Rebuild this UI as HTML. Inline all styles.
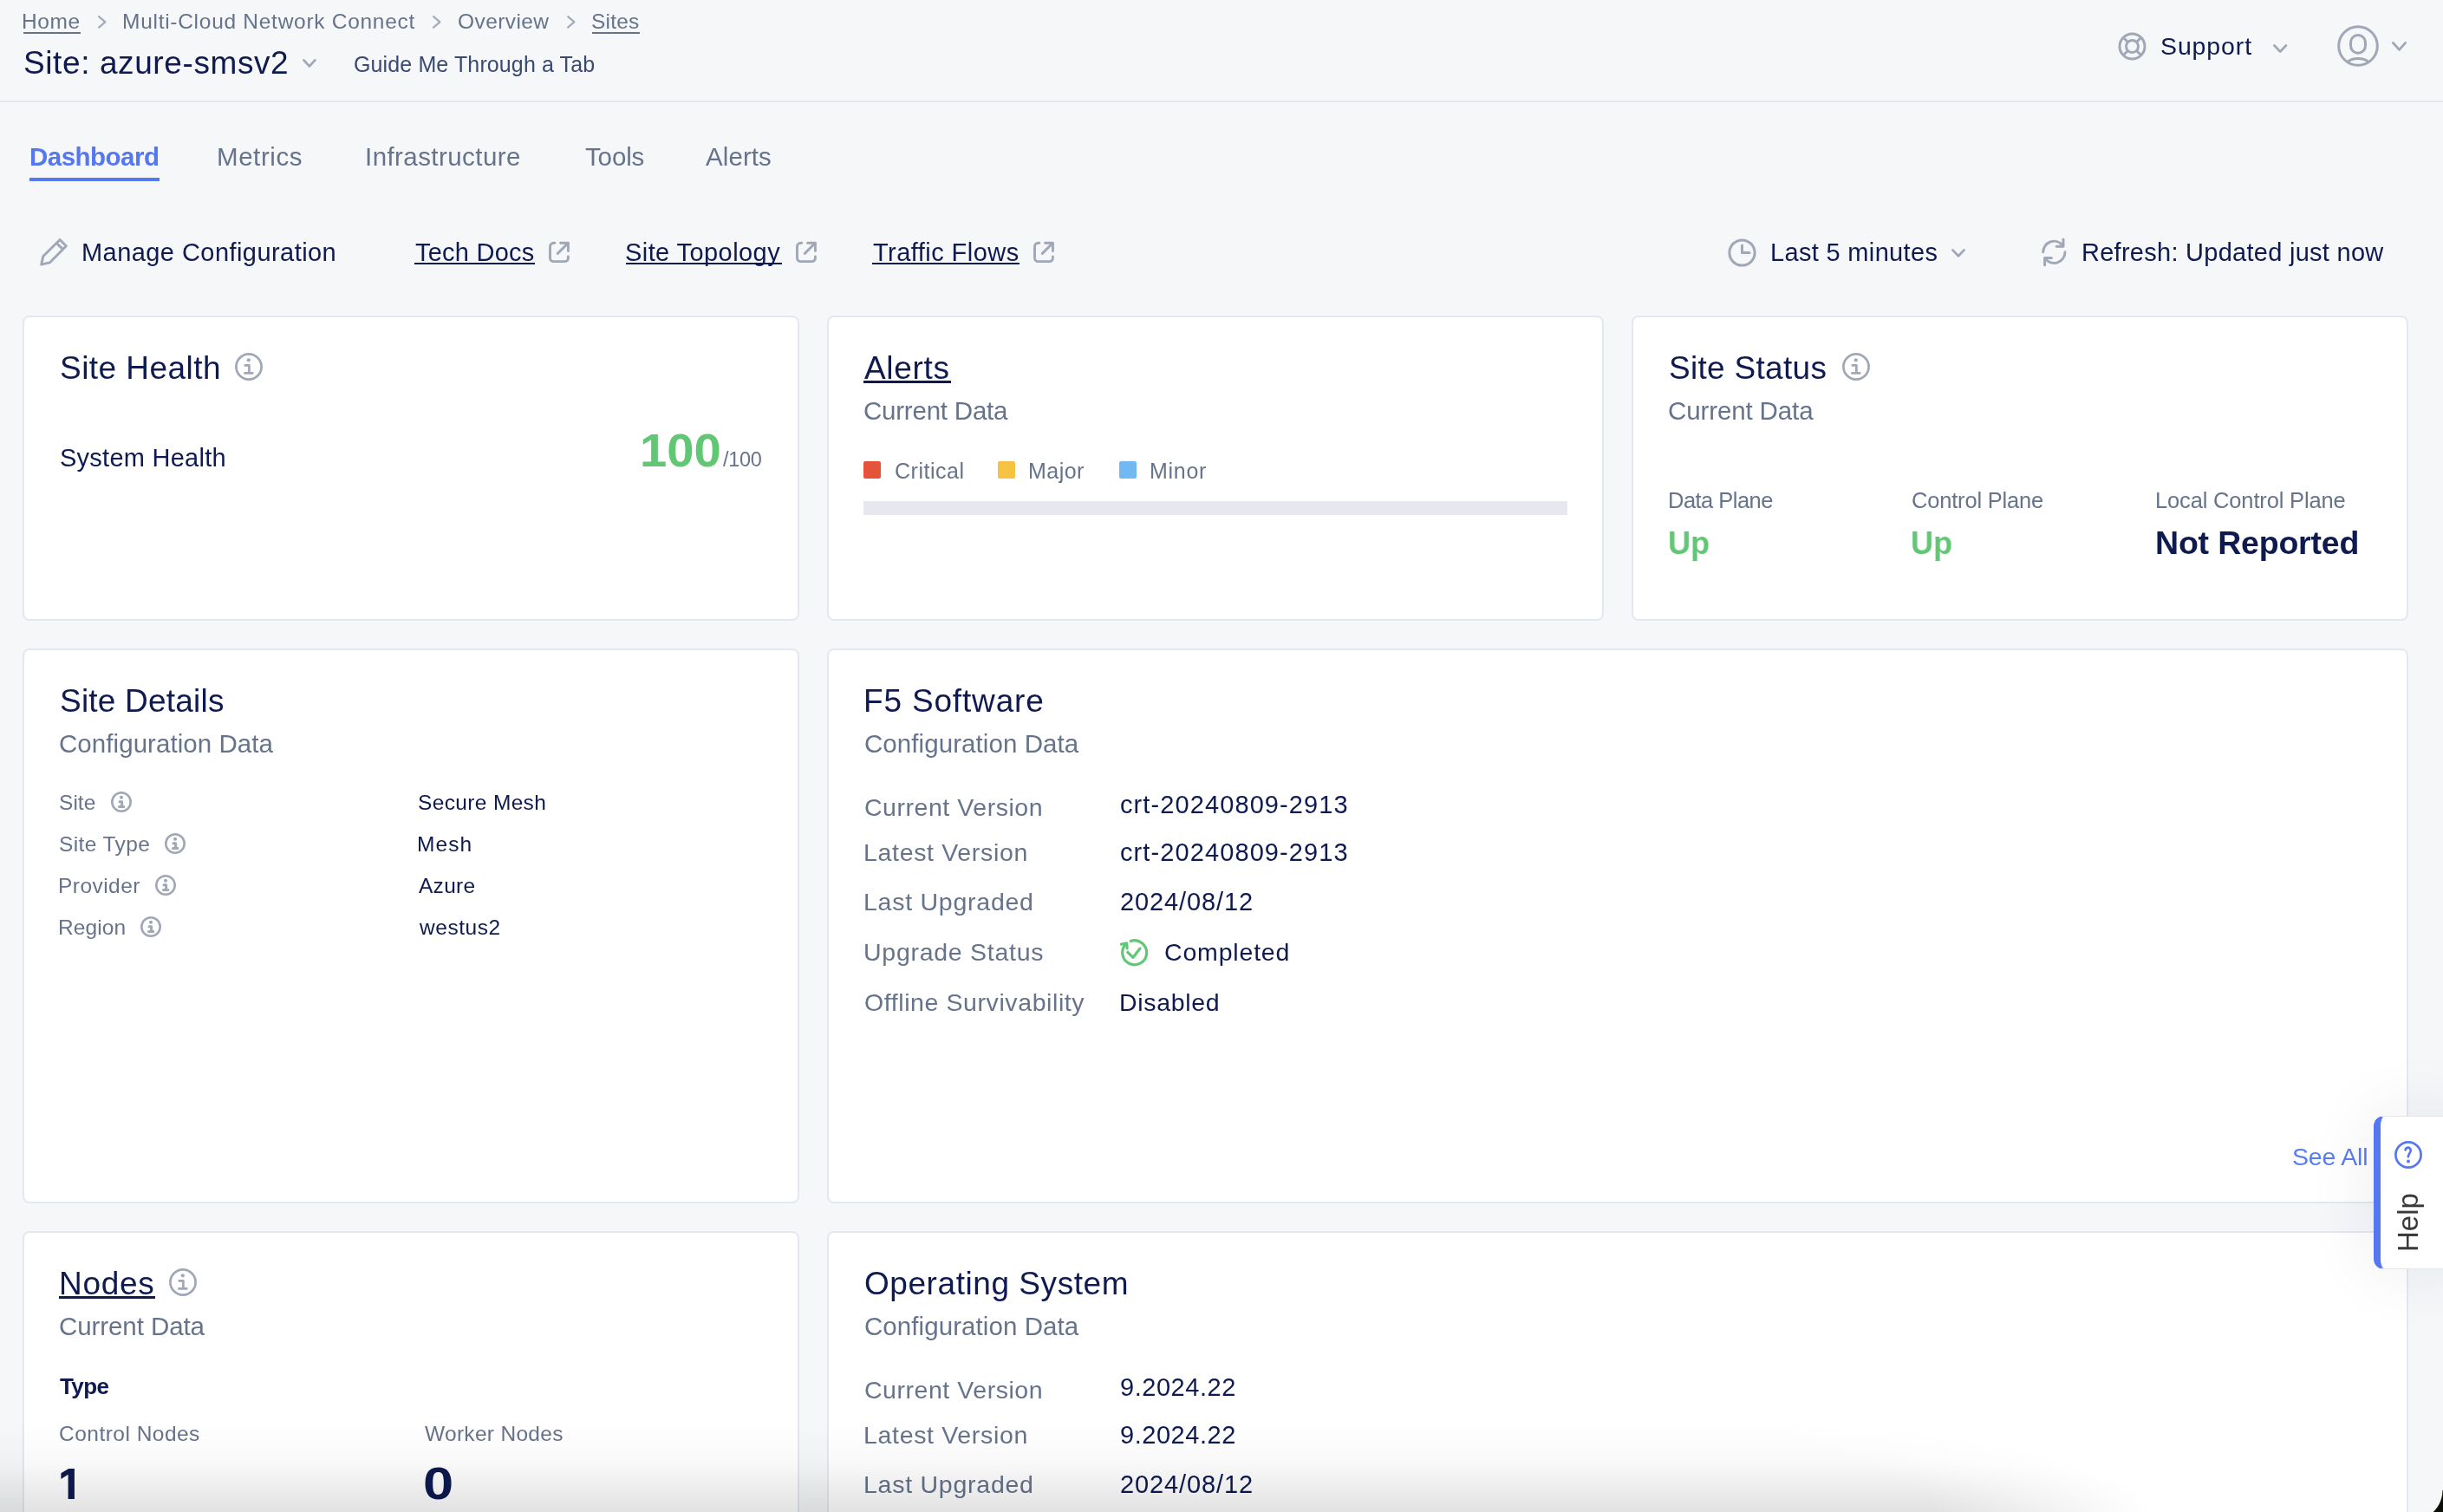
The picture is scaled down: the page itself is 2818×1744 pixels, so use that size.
<!DOCTYPE html>
<html><head><meta charset="utf-8">
<style>
html,body{margin:0;padding:0;}
body{width:2818px;height:1744px;position:relative;overflow:hidden;background:#f6f7f9;font-family:"Liberation Sans",sans-serif;}
.t{position:absolute;white-space:nowrap;will-change:transform;}
.r{position:absolute;}
.i{position:absolute;overflow:visible;}
.card{position:absolute;box-sizing:border-box;background:#fff;border:2px solid #e4e7f1;border-radius:8px;}
#help{position:absolute;left:2738px;top:1287px;width:120px;height:177px;box-sizing:border-box;background:#fff;border:1px solid #e3e6f0;border-left:8px solid #5578f1;border-radius:12px 0 0 12px;box-shadow:0 0 80px rgba(30,40,70,0.085);}
#shade{position:absolute;left:0;top:1640px;width:2818px;height:104px;background:linear-gradient(to bottom,rgba(0,0,0,0) 0%,rgba(0,0,0,0.025) 45%,rgba(0,0,0,0.115) 100%);-webkit-mask-image:radial-gradient(ellipse 2480px 230px at 0 100%,#000 90%,transparent 100%);mask-image:radial-gradient(ellipse 2480px 230px at 0 100%,#000 90%,transparent 100%);}
#corner{position:absolute;left:2783px;top:1719px;width:35px;height:25px;background:radial-gradient(circle 34.4px at 0 0,transparent 33.9px,#0e0e08 34.9px);}
</style></head><body>
<div class="r" style="left:0px;top:116px;width:2818px;height:2px;background:#e4e7ef;"></div>
<div class="r" style="left:26.5px;top:37px;width:66px;height:2px;background:#66738a;"></div>
<div class="r" style="left:682.5px;top:37px;width:55px;height:2px;background:#66738a;"></div>
<svg class="i" style="left:112.5px;top:17.8px" width="9.5" height="14.8" viewBox="0 0 9.5 14.8"><path d="M1.1 1.1L8.4 7.4L1.1 13.700000000000001" fill="none" stroke="#a3abbb" stroke-width="2.2" stroke-linecap="round" stroke-linejoin="round"/></svg>
<svg class="i" style="left:498.7px;top:17.8px" width="9.5" height="14.8" viewBox="0 0 9.5 14.8"><path d="M1.1 1.1L8.4 7.4L1.1 13.700000000000001" fill="none" stroke="#a3abbb" stroke-width="2.2" stroke-linecap="round" stroke-linejoin="round"/></svg>
<svg class="i" style="left:653.5px;top:17.8px" width="9.5" height="14.8" viewBox="0 0 9.5 14.8"><path d="M1.1 1.1L8.4 7.4L1.1 13.700000000000001" fill="none" stroke="#a3abbb" stroke-width="2.2" stroke-linecap="round" stroke-linejoin="round"/></svg>
<svg class="i" style="left:349.2px;top:67.6px" width="15.8" height="9.8" viewBox="0 0 15.8 9.8"><path d="M1.4 1.4L7.9 8.4L14.4 1.4" fill="none" stroke="#a0a7b7" stroke-width="2.8" stroke-linecap="round" stroke-linejoin="round"/></svg>
<div class="r" style="left:34px;top:205px;width:150px;height:4px;background:#5578f1;"></div>
<svg class="i" style="left:40px;top:268px" width="45" height="45" viewBox="0 0 45 45"><g transform="translate(22 22.8) scale(1.055) translate(-22 -22.8)"><path d="M28.7 9.3L35.6 16.2L17.6 34.3L8.4 36.4L10.5 27.2Z M25.1 12.9L32 19.8" fill="none" stroke="#a0a7b7" stroke-width="2.75" stroke-linejoin="round" stroke-linecap="round"/></g></svg>
<div class="r" style="left:478px;top:303px;width:139px;height:2px;background:#0e1a50;"></div>
<div class="r" style="left:721.5px;top:303px;width:180px;height:2px;background:#0e1a50;"></div>
<div class="r" style="left:1006px;top:303px;width:170px;height:2px;background:#0e1a50;"></div>
<svg class="i" style="left:633px;top:278.5px" width="24" height="24" viewBox="0 0 24 24"><path d="M6.85 1.25H5.5A4 4 0 0 0 1.5 5.25V18.6A4 4 0 0 0 5.5 22.6H18.45A4 4 0 0 0 22.45 18.6V16.95" fill="none" stroke="#a0a7b7" stroke-width="2.9" stroke-linecap="round"/><path d="M13.55 1.25H22.45V10.55M22.45 1.25L10.3 13.4" fill="none" stroke="#a0a7b7" stroke-width="2.9" stroke-linecap="round" stroke-linejoin="round"/></svg>
<svg class="i" style="left:918px;top:278.5px" width="24" height="24" viewBox="0 0 24 24"><path d="M6.85 1.25H5.5A4 4 0 0 0 1.5 5.25V18.6A4 4 0 0 0 5.5 22.6H18.45A4 4 0 0 0 22.45 18.6V16.95" fill="none" stroke="#a0a7b7" stroke-width="2.9" stroke-linecap="round"/><path d="M13.55 1.25H22.45V10.55M22.45 1.25L10.3 13.4" fill="none" stroke="#a0a7b7" stroke-width="2.9" stroke-linecap="round" stroke-linejoin="round"/></svg>
<svg class="i" style="left:1191.5px;top:278.5px" width="24" height="24" viewBox="0 0 24 24"><path d="M6.85 1.25H5.5A4 4 0 0 0 1.5 5.25V18.6A4 4 0 0 0 5.5 22.6H18.45A4 4 0 0 0 22.45 18.6V16.95" fill="none" stroke="#a0a7b7" stroke-width="2.9" stroke-linecap="round"/><path d="M13.55 1.25H22.45V10.55M22.45 1.25L10.3 13.4" fill="none" stroke="#a0a7b7" stroke-width="2.9" stroke-linecap="round" stroke-linejoin="round"/></svg>
<svg class="i" style="left:1993px;top:274.5px" width="33" height="33" viewBox="0 0 33 33"><circle cx="16.5" cy="16.5" r="14.6" fill="none" stroke="#a0a7b7" stroke-width="3"/><path d="M16.5 8V16.5H25" fill="none" stroke="#a0a7b7" stroke-width="3" stroke-linecap="round" stroke-linejoin="round"/></svg>
<svg class="i" style="left:2251px;top:287.2px" width="16" height="9.6" viewBox="0 0 16 9.6"><path d="M1.4 1.4L8.0 8.2L14.6 1.4" fill="none" stroke="#a0a7b7" stroke-width="2.8" stroke-linecap="round" stroke-linejoin="round"/></svg>
<svg class="i" style="left:2350px;top:270px" width="40" height="42" viewBox="0 0 40 42"><path d="M6.8 20.8A12.6 12.6 0 0 1 28.95 12.6M32 20.8A12.6 12.6 0 0 1 9.85 29" fill="none" stroke="#a0a7b7" stroke-width="3" stroke-linecap="round"/><path d="M30 6V14.2H22.2M8.6 35.8V27.5H16.4" fill="none" stroke="#a0a7b7" stroke-width="3" stroke-linecap="round" stroke-linejoin="round"/></svg>
<svg class="i" style="left:2443px;top:36.6px" width="33" height="33" viewBox="0 0 33 33"><circle cx="16.5" cy="16.5" r="14.5" fill="none" stroke="#a0a7b7" stroke-width="3"/><circle cx="16.5" cy="16.5" r="7" fill="none" stroke="#a0a7b7" stroke-width="3"/><path d="M6.2 6.2L11.5 11.5M26.8 6.2L21.5 11.5M6.2 26.8L11.5 21.5M26.8 26.8L21.5 21.5" stroke="#a0a7b7" stroke-width="3"/></svg>
<svg class="i" style="left:2621.9px;top:51.1px" width="16.4" height="9.9" viewBox="0 0 16.4 9.9"><path d="M1.4 1.4L8.2 8.5L14.999999999999998 1.4" fill="none" stroke="#a0a7b7" stroke-width="2.8" stroke-linecap="round" stroke-linejoin="round"/></svg>
<svg class="i" style="left:2696px;top:29px" width="48" height="48" viewBox="0 0 48 48"><circle cx="24" cy="24" r="22.3" fill="none" stroke="#a0a7b7" stroke-width="3"/><rect x="15.5" y="11.5" width="17" height="20.7" rx="8.5" ry="8.5" fill="none" stroke="#a0a7b7" stroke-width="3"/><path d="M12.5 42A14 8 0 0 1 35.5 42" fill="none" stroke="#a0a7b7" stroke-width="3"/></svg>
<svg class="i" style="left:2759.2px;top:47.5px" width="17.1" height="10.8" viewBox="0 0 17.1 10.8"><path d="M1.4 1.4L8.55 9.4L15.700000000000001 1.4" fill="none" stroke="#a0a7b7" stroke-width="2.8" stroke-linecap="round" stroke-linejoin="round"/></svg>
<div class="card" style="left:26px;top:364px;width:896px;height:352px"></div>
<div class="card" style="left:954px;top:364px;width:896px;height:352px"></div>
<div class="card" style="left:1882px;top:364px;width:896px;height:352px"></div>
<div class="card" style="left:26px;top:748px;width:896px;height:640px"></div>
<div class="card" style="left:954px;top:748px;width:1824px;height:640px"></div>
<div class="card" style="left:26px;top:1420px;width:896px;height:380px"></div>
<div class="card" style="left:954px;top:1420px;width:1824px;height:380px"></div>
<svg class="i" style="left:271px;top:407px" width="32" height="32" viewBox="0 0 32 32"><circle cx="16" cy="16" r="14.6" fill="none" stroke="#a0a7b7" stroke-width="2.7"/><circle cx="15.8" cy="8.3" r="2.1" fill="#a0a7b7"/><path d="M11.8 14.4H16.4V23.4M11.4 23.4H20.3" fill="none" stroke="#a0a7b7" stroke-width="2.7" stroke-linecap="round" stroke-linejoin="round"/></svg>
<svg class="i" style="left:2125px;top:407px" width="32" height="32" viewBox="0 0 32 32"><circle cx="16" cy="16" r="14.6" fill="none" stroke="#a0a7b7" stroke-width="2.7"/><circle cx="15.8" cy="8.3" r="2.1" fill="#a0a7b7"/><path d="M11.8 14.4H16.4V23.4M11.4 23.4H20.3" fill="none" stroke="#a0a7b7" stroke-width="2.7" stroke-linecap="round" stroke-linejoin="round"/></svg>
<svg class="i" style="left:195px;top:1463px" width="32" height="32" viewBox="0 0 32 32"><circle cx="16" cy="16" r="14.6" fill="none" stroke="#a0a7b7" stroke-width="2.7"/><circle cx="15.8" cy="8.3" r="2.1" fill="#a0a7b7"/><path d="M11.8 14.4H16.4V23.4M11.4 23.4H20.3" fill="none" stroke="#a0a7b7" stroke-width="2.7" stroke-linecap="round" stroke-linejoin="round"/></svg>
<svg class="i" style="left:127.5px;top:913.3px" width="24" height="24" viewBox="0 0 24 24"><circle cx="12" cy="12" r="10.7" fill="none" stroke="#a0a7b7" stroke-width="2.6"/><circle cx="12" cy="6.7" r="2.05" fill="#a0a7b7"/><path d="M10 11.7H12.6V17.6M9.5 17.6H14.8" fill="none" stroke="#a0a7b7" stroke-width="3" stroke-linecap="round" stroke-linejoin="round"/></svg>
<svg class="i" style="left:190.3px;top:961.3px" width="24" height="24" viewBox="0 0 24 24"><circle cx="12" cy="12" r="10.7" fill="none" stroke="#a0a7b7" stroke-width="2.6"/><circle cx="12" cy="6.7" r="2.05" fill="#a0a7b7"/><path d="M10 11.7H12.6V17.6M9.5 17.6H14.8" fill="none" stroke="#a0a7b7" stroke-width="3" stroke-linecap="round" stroke-linejoin="round"/></svg>
<svg class="i" style="left:178.5px;top:1009.3px" width="24" height="24" viewBox="0 0 24 24"><circle cx="12" cy="12" r="10.7" fill="none" stroke="#a0a7b7" stroke-width="2.6"/><circle cx="12" cy="6.7" r="2.05" fill="#a0a7b7"/><path d="M10 11.7H12.6V17.6M9.5 17.6H14.8" fill="none" stroke="#a0a7b7" stroke-width="3" stroke-linecap="round" stroke-linejoin="round"/></svg>
<svg class="i" style="left:161.7px;top:1057.3px" width="24" height="24" viewBox="0 0 24 24"><circle cx="12" cy="12" r="10.7" fill="none" stroke="#a0a7b7" stroke-width="2.6"/><circle cx="12" cy="6.7" r="2.05" fill="#a0a7b7"/><path d="M10 11.7H12.6V17.6M9.5 17.6H14.8" fill="none" stroke="#a0a7b7" stroke-width="3" stroke-linecap="round" stroke-linejoin="round"/></svg>
<div class="r" style="left:996px;top:439px;width:100.5px;height:3px;background:#0e1a50;"></div>
<div class="r" style="left:68px;top:1495px;width:111px;height:3px;background:#0e1a50;"></div>
<div class="r" style="left:996px;top:532px;width:20px;height:20px;background:#e5543a;border-radius:2px"></div>
<div class="r" style="left:1151px;top:532px;width:20px;height:20px;background:#f5c242;border-radius:2px"></div>
<div class="r" style="left:1291px;top:532px;width:20px;height:20px;background:#72b9f3;border-radius:2px"></div>
<div class="r" style="left:996px;top:578px;width:812px;height:16px;background:#e6e7ef;"></div>
<svg class="i" style="left:1290px;top:1081px" width="36" height="36" viewBox="0 0 36 36"><path d="M14.2 4.5A14 14 0 1 1 9.6 7.1" fill="none" stroke="#62c774" stroke-width="3.2" stroke-linecap="round"/><path d="M3.3 8.1L9.6 7.1L10.1 12.8" fill="none" stroke="#62c774" stroke-width="3.2" stroke-linecap="round" stroke-linejoin="round"/><path d="M10.8 17.3L16.9 23.4L25 13.1" fill="none" stroke="#62c774" stroke-width="3.2" stroke-linecap="round" stroke-linejoin="round"/></svg>
<svg class="i" style="left:60px;top:1685px" width="40" height="50" viewBox="0 0 40 50"><path d="M19.2 8.9H25.9V43.9H18.6V15.8L10.4 20.9V14.25Z" fill="#0e1a50"/></svg>
<div class="t" style="left:25.4px;top:13.0px;font-size:24.5px;line-height:24.5px;letter-spacing:0.62px;color:#66738a;font-weight:400;">Home</div>
<div class="t" style="left:140.8px;top:13.0px;font-size:24.5px;line-height:24.5px;letter-spacing:0.72px;color:#66738a;font-weight:400;">Multi-Cloud Network Connect</div>
<div class="t" style="left:527.5px;top:13.0px;font-size:24.5px;line-height:24.5px;letter-spacing:0.41px;color:#66738a;font-weight:400;">Overview</div>
<div class="t" style="left:682.3px;top:13.0px;font-size:24.5px;line-height:24.5px;letter-spacing:0.20px;color:#66738a;font-weight:400;">Sites</div>
<div class="t" style="left:26.9px;top:54.0px;font-size:37.0px;line-height:37.0px;letter-spacing:0.60px;color:#0e1a50;font-weight:400;">Site: azure-smsv2</div>
<div class="t" style="left:407.5px;top:61.9px;font-size:25.0px;line-height:25.0px;letter-spacing:0.12px;color:#3b4a72;font-weight:400;">Guide Me Through a Tab</div>
<div class="t" style="left:2491.8px;top:38.7px;font-size:28.5px;line-height:28.5px;letter-spacing:0.88px;color:#0e1a50;font-weight:400;">Support</div>
<div class="t" style="left:33.7px;top:166.2px;font-size:29.5px;line-height:29.5px;letter-spacing:-0.51px;color:#5578f1;font-weight:700;">Dashboard</div>
<div class="t" style="left:250.3px;top:166.2px;font-size:29.5px;line-height:29.5px;letter-spacing:0.57px;color:#66738a;font-weight:400;">Metrics</div>
<div class="t" style="left:421.2px;top:166.2px;font-size:29.5px;line-height:29.5px;letter-spacing:0.43px;color:#66738a;font-weight:400;">Infrastructure</div>
<div class="t" style="left:674.5px;top:166.2px;font-size:29.5px;line-height:29.5px;letter-spacing:-0.13px;color:#66738a;font-weight:400;">Tools</div>
<div class="t" style="left:813.9px;top:166.2px;font-size:29.5px;line-height:29.5px;letter-spacing:0.09px;color:#66738a;font-weight:400;">Alerts</div>
<div class="t" style="left:93.5px;top:276.7px;font-size:29.0px;line-height:29.0px;letter-spacing:0.44px;color:#0e1a50;font-weight:400;">Manage Configuration</div>
<div class="t" style="left:479.0px;top:276.8px;font-size:29.0px;line-height:29.0px;letter-spacing:0.23px;color:#0e1a50;font-weight:400;">Tech Docs</div>
<div class="t" style="left:721.3px;top:276.7px;font-size:29.0px;line-height:29.0px;letter-spacing:0.42px;color:#0e1a50;font-weight:400;">Site Topology</div>
<div class="t" style="left:1007.0px;top:276.7px;font-size:29.0px;line-height:29.0px;letter-spacing:0.45px;color:#0e1a50;font-weight:400;">Traffic Flows</div>
<div class="t" style="left:2041.6px;top:277.2px;font-size:29.0px;line-height:29.0px;letter-spacing:0.33px;color:#0e1a50;font-weight:400;">Last 5 minutes</div>
<div class="t" style="left:2400.9px;top:277.2px;font-size:29.0px;line-height:29.0px;letter-spacing:0.27px;color:#0e1a50;font-weight:400;">Refresh: Updated just now</div>
<div class="t" style="left:69.1px;top:405.7px;font-size:37.0px;line-height:37.0px;letter-spacing:0.45px;color:#0e1a50;font-weight:400;">Site Health</div>
<div class="t" style="left:68.6px;top:513.8px;font-size:29.0px;line-height:29.0px;letter-spacing:0.25px;color:#0e1a50;font-weight:400;">System Health</div>
<div class="t" style="left:737.9px;top:493.1px;font-size:53.0px;line-height:53.0px;letter-spacing:0;transform-origin:0 0;transform:scaleX(1.0613);color:#62c774;font-weight:700;">100</div>
<div class="t" style="left:833.5px;top:518.8px;font-size:23.5px;line-height:23.5px;letter-spacing:-0.29px;color:#66738a;font-weight:400;">/100</div>
<div class="t" style="left:997.0px;top:405.8px;font-size:37.0px;line-height:37.0px;letter-spacing:0.68px;color:#0e1a50;font-weight:400;">Alerts</div>
<div class="t" style="left:996.4px;top:459.0px;font-size:29.5px;line-height:29.5px;letter-spacing:-0.22px;color:#66738a;font-weight:400;">Current Data</div>
<div class="t" style="left:1031.5px;top:531.0px;font-size:25.0px;line-height:25.0px;letter-spacing:0.52px;color:#66738a;font-weight:400;">Critical</div>
<div class="t" style="left:1186.0px;top:531.0px;font-size:25.0px;line-height:25.0px;letter-spacing:0.45px;color:#66738a;font-weight:400;">Major</div>
<div class="t" style="left:1325.5px;top:531.0px;font-size:25.0px;line-height:25.0px;letter-spacing:0.70px;color:#66738a;font-weight:400;">Minor</div>
<div class="t" style="left:1925.1px;top:405.7px;font-size:37.0px;line-height:37.0px;letter-spacing:0.30px;color:#0e1a50;font-weight:400;">Site Status</div>
<div class="t" style="left:1924.4px;top:459.0px;font-size:29.5px;line-height:29.5px;letter-spacing:-0.12px;color:#66738a;font-weight:400;">Current Data</div>
<div class="t" style="left:1924.0px;top:564.9px;font-size:25.5px;line-height:25.5px;letter-spacing:-0.53px;color:#66738a;font-weight:400;">Data Plane</div>
<div class="t" style="left:2205.0px;top:564.9px;font-size:25.5px;line-height:25.5px;letter-spacing:-0.19px;color:#66738a;font-weight:400;">Control Plane</div>
<div class="t" style="left:2486.0px;top:564.9px;font-size:25.5px;line-height:25.5px;letter-spacing:-0.16px;color:#66738a;font-weight:400;">Local Control Plane</div>
<div class="t" style="left:1924.4px;top:607.9px;font-size:37.5px;line-height:37.5px;letter-spacing:0;transform-origin:0 0;transform:scaleX(0.9643);color:#62c774;font-weight:700;">Up</div>
<div class="t" style="left:2204.4px;top:607.9px;font-size:37.5px;line-height:37.5px;letter-spacing:0;transform-origin:0 0;transform:scaleX(0.9643);color:#62c774;font-weight:700;">Up</div>
<div class="t" style="left:2486.0px;top:607.9px;font-size:37.5px;line-height:37.5px;letter-spacing:-0.19px;color:#0e1a50;font-weight:700;">Not Reported</div>
<div class="t" style="left:69.1px;top:789.9px;font-size:37.0px;line-height:37.0px;letter-spacing:0.21px;color:#0e1a50;font-weight:400;">Site Details</div>
<div class="t" style="left:68.4px;top:843.0px;font-size:29.5px;line-height:29.5px;letter-spacing:0.06px;color:#66738a;font-weight:400;">Configuration Data</div>
<div class="t" style="left:68.4px;top:913.8px;font-size:24.5px;line-height:24.5px;letter-spacing:0.04px;color:#66738a;font-weight:400;">Site</div>
<div class="t" style="left:68.4px;top:961.8px;font-size:24.5px;line-height:24.5px;letter-spacing:0.39px;color:#66738a;font-weight:400;">Site Type</div>
<div class="t" style="left:67.4px;top:1010.1px;font-size:24.5px;line-height:24.5px;letter-spacing:0.45px;color:#66738a;font-weight:400;">Provider</div>
<div class="t" style="left:67.4px;top:1058.0px;font-size:24.5px;line-height:24.5px;letter-spacing:0.12px;color:#66738a;font-weight:400;">Region</div>
<div class="t" style="left:481.5px;top:913.8px;font-size:24.5px;line-height:24.5px;letter-spacing:0.35px;color:#0e1a50;font-weight:400;">Secure Mesh</div>
<div class="t" style="left:480.5px;top:961.8px;font-size:24.5px;line-height:24.5px;letter-spacing:1.07px;color:#0e1a50;font-weight:400;">Mesh</div>
<div class="t" style="left:482.5px;top:1010.1px;font-size:24.5px;line-height:24.5px;letter-spacing:0.28px;color:#0e1a50;font-weight:400;">Azure</div>
<div class="t" style="left:483.5px;top:1058.0px;font-size:24.5px;line-height:24.5px;letter-spacing:0.54px;color:#0e1a50;font-weight:400;">westus2</div>
<div class="t" style="left:996.1px;top:789.9px;font-size:37.0px;line-height:37.0px;letter-spacing:0.83px;color:#0e1a50;font-weight:400;">F5 Software</div>
<div class="t" style="left:996.5px;top:843.2px;font-size:29.5px;line-height:29.5px;letter-spacing:0.07px;color:#66738a;font-weight:400;">Configuration Data</div>
<div class="t" style="left:996.7px;top:916.9px;font-size:28.5px;line-height:28.5px;letter-spacing:0.54px;color:#66738a;font-weight:400;">Current Version</div>
<div class="t" style="left:995.7px;top:968.8px;font-size:28.5px;line-height:28.5px;letter-spacing:0.67px;color:#66738a;font-weight:400;">Latest Version</div>
<div class="t" style="left:995.7px;top:1026.2px;font-size:28.5px;line-height:28.5px;letter-spacing:0.75px;color:#66738a;font-weight:400;">Last Upgraded</div>
<div class="t" style="left:995.7px;top:1084.4px;font-size:28.5px;line-height:28.5px;letter-spacing:0.73px;color:#66738a;font-weight:400;">Upgrade Status</div>
<div class="t" style="left:996.7px;top:1142.2px;font-size:28.5px;line-height:28.5px;letter-spacing:0.59px;color:#66738a;font-weight:400;">Offline Survivability</div>
<div class="t" style="left:1292.2px;top:914.0px;font-size:29.0px;line-height:29.0px;letter-spacing:1.10px;color:#0e1a50;font-weight:400;">crt-20240809-2913</div>
<div class="t" style="left:1292.2px;top:969.0px;font-size:29.0px;line-height:29.0px;letter-spacing:1.10px;color:#0e1a50;font-weight:400;">crt-20240809-2913</div>
<div class="t" style="left:1292.0px;top:1026.2px;font-size:29.0px;line-height:29.0px;letter-spacing:0.89px;color:#0e1a50;font-weight:400;">2024/08/12</div>
<div class="t" style="left:1342.5px;top:1084.4px;font-size:28.5px;line-height:28.5px;letter-spacing:0.82px;color:#0e1a50;font-weight:400;">Completed</div>
<div class="t" style="left:1291.0px;top:1142.2px;font-size:28.5px;line-height:28.5px;letter-spacing:0.68px;color:#0e1a50;font-weight:400;">Disabled</div>
<div class="t" style="left:2643.9px;top:1319.6px;font-size:28.5px;line-height:28.5px;letter-spacing:-0.19px;color:#5a7cf1;font-weight:400;">See All</div>
<div class="t" style="left:68.0px;top:1461.8px;font-size:37.0px;line-height:37.0px;letter-spacing:0.69px;color:#0e1a50;font-weight:400;">Nodes</div>
<div class="t" style="left:68.4px;top:1515.0px;font-size:29.5px;line-height:29.5px;letter-spacing:-0.08px;color:#66738a;font-weight:400;">Current Data</div>
<div class="t" style="left:69.0px;top:1586.4px;font-size:26.0px;line-height:26.0px;letter-spacing:-0.63px;color:#0e1a50;font-weight:700;">Type</div>
<div class="t" style="left:68.3px;top:1641.7px;font-size:24.5px;line-height:24.5px;letter-spacing:0.48px;color:#66738a;font-weight:400;">Control Nodes</div>
<div class="t" style="left:490.3px;top:1641.7px;font-size:24.5px;line-height:24.5px;letter-spacing:0.30px;color:#66738a;font-weight:400;">Worker Nodes</div>
<div class="t" style="left:488.0px;top:1686.3px;font-size:51.0px;line-height:51.0px;letter-spacing:0;transform-origin:0 0;transform:scaleX(1.2400);color:#0e1a50;font-weight:700;">0</div>
<div class="t" style="left:997.3px;top:1461.6px;font-size:37.0px;line-height:37.0px;letter-spacing:0.56px;color:#0e1a50;font-weight:400;">Operating System</div>
<div class="t" style="left:996.5px;top:1514.8px;font-size:29.5px;line-height:29.5px;letter-spacing:0.07px;color:#66738a;font-weight:400;">Configuration Data</div>
<div class="t" style="left:996.7px;top:1588.6px;font-size:28.5px;line-height:28.5px;letter-spacing:0.54px;color:#66738a;font-weight:400;">Current Version</div>
<div class="t" style="left:995.7px;top:1640.8px;font-size:28.5px;line-height:28.5px;letter-spacing:0.67px;color:#66738a;font-weight:400;">Latest Version</div>
<div class="t" style="left:995.7px;top:1698.3px;font-size:28.5px;line-height:28.5px;letter-spacing:0.75px;color:#66738a;font-weight:400;">Last Upgraded</div>
<div class="t" style="left:1292.2px;top:1585.8px;font-size:29.0px;line-height:29.0px;letter-spacing:0.54px;color:#0e1a50;font-weight:400;">9.2024.22</div>
<div class="t" style="left:1292.2px;top:1640.8px;font-size:29.0px;line-height:29.0px;letter-spacing:0.54px;color:#0e1a50;font-weight:400;">9.2024.22</div>
<div class="t" style="left:1292.0px;top:1698.3px;font-size:29.0px;line-height:29.0px;letter-spacing:0.89px;color:#0e1a50;font-weight:400;">2024/08/12</div>
<div id="help"></div>
<svg class="i" style="left:2762px;top:1315.5px" width="32" height="32" viewBox="0 0 32 32"><circle cx="16" cy="16" r="14.6" fill="none" stroke="#5578f1" stroke-width="2.7"/><path d="M12.6 10.4C13 8.6 14.2 7.6 15.6 7.6C17.4 7.6 18.8 9 18.7 11C18.6 13.5 16.2 15.2 15.8 18.2" fill="none" stroke="#5578f1" stroke-width="2.7" stroke-linecap="round" stroke-linejoin="round"/><circle cx="16" cy="23.5" r="1.95" fill="#5578f1"/></svg>
<div class="t" style="left:2788.7px;top:1443.5px;font-size:33px;line-height:33px;color:#3a3a3a;transform-origin:0 0;transform:rotate(-90deg) translate(0,-28px);">Help</div>
<div id="shade"></div>
<div id="corner"></div>
</body></html>
